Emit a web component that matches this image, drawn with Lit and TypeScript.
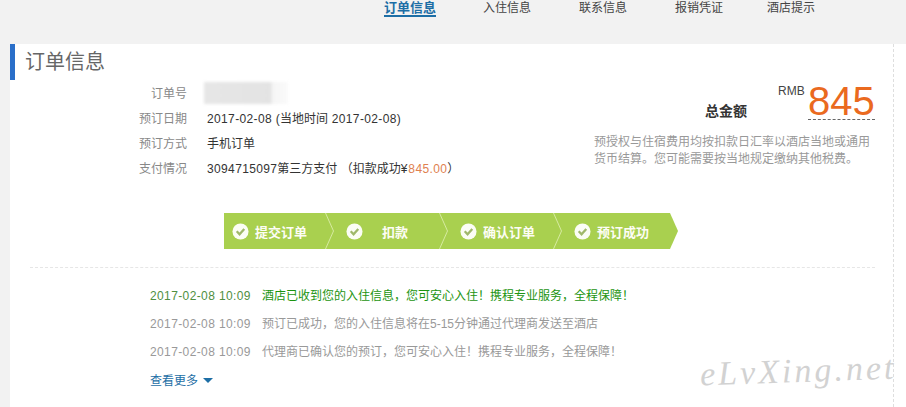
import { LitElement, html, css } from "lit";
import { customElement } from "lit/decorators.js";

const check = html`<svg class="chk" viewBox="0 0 18 18" width="17" height="17"><circle cx="9" cy="9" r="8.5" fill="#fbfdf5"/><path d="M5 8.8 L8 12 L13 6.3" fill="none" stroke="#9fb86a" stroke-width="2.4"/></svg>`;
const sep = html`<svg class="sep" viewBox="0 0 9 36" width="9" height="36"><path d="M0.5 0 L8.5 18 L0.5 36" fill="none" stroke="#d6eaa0" stroke-width="1"/></svg>`;

const steps = [
  { t: "提交订单", cls: "" },
  { t: "扣款", cls: "wide" },
  { t: "确认订单", cls: "" },
  { t: "预订成功", cls: "" },
];
const logs = [
  { time: "2017-02-08 10:09", msg: "酒店已收到您的入住信息，您可安心入住！携程专业服务，全程保障！", on: true },
  { time: "2017-02-08 10:09", msg: "预订已成功，您的入住信息将在5-15分钟通过代理商发送至酒店", on: false },
  { time: "2017-02-08 10:09", msg: "代理商已确认您的预订，您可安心入住！携程专业服务，全程保障！", on: false },
];

@customElement("app-root")
export class AppRoot extends LitElement {
  static styles = css`
    :host { display: block; width: 906px; height: 407px; overflow: hidden; background: #f2f2f2; font-family: "Liberation Sans", "Noto Sans CJK SC", sans-serif; font-size: 12px; color: #333; }
    .nav { height: 44px; display: flex; align-items: flex-start; padding-left: 384px; box-sizing: border-box; }
    .nav a { line-height: 15px; margin-top: 1px; color: #444; white-space: nowrap; margin-right: 48px; }
    .nav a.on { font-size: 13px; margin-top: 0; color: #1d6ea5; font-weight: 700; border-bottom: 2px solid #1d6ea5; height: 15px; margin-right: 47px; }
    .nav a.tight { margin-right: 44px; }
    .panel { position: relative; margin-left: 10px; background: #fff; height: 363px; }
    .inner { width: 883px; height: 363px; border-right: 1px dashed #dedede; }
    .title { border-left: 5px solid #2a6fc9; height: 36px; padding-left: 10px; font-size: 20px; line-height: 37px; color: #666; }
    .main { display: flex; }
    .info { padding: 2px 0 0 129px; width: 560px; box-sizing: border-box; }
    .row { display: flex; height: 25px; line-height: 25px; }
    .k { width: 48px; text-align: right; color: #888; margin-right: 20px; flex: none; }
    .v { color: #333; white-space: nowrap; }
    .d { letter-spacing: 0.36px; }
    .blur { width: 84px; height: 22px; margin: 0 0 0 -3px; background: linear-gradient(90deg, #e6e6e6, #e3e3e3 80%, #f5f5f5 81%, #fafafa 100%); filter: blur(1.5px); }
    .org { color: #e0814f; margin-left: 1px; }
    .right { width: 281px; margin-left: 24px; margin-top: -1px; display: flex; flex-direction: column; }
    .total { display: flex; align-items: flex-start; height: 46px; }
    .total .lbl { font-size: 14px; font-weight: 700; color: #333; margin: 22px 0 0 111px; width: 73px; line-height: 20px; }
    .total .rmb { font-size: 12px; color: #444; width: 30px; line-height: 14px; margin-top: 5px; }
    .total .num { font-size: 40px; line-height: 38px; color: #ea6a1f; width: 67px; height: 37px; border-bottom: 1px dashed #666; margin-top: 3px; }
    .desc { color: #999; line-height: 17px; margin-top: 9px; }
    .bar { display: flex; margin: 31px 0 0 214px; width: 454px; height: 36px; background: #a9d04f; clip-path: polygon(0 0, 446px 0, 454px 18px, 446px 36px, 0 36px); }
    .seg { display: flex; align-items: center; width: 114px; flex: none; color: #fdfdf5; font-size: 13px; font-weight: 700; padding-left: 8px; box-sizing: border-box; white-space: nowrap; }
    .seg .sep { margin-left: auto; margin-right: 4px; }
    .seg .chk { flex: none; }
    .seg .lb { margin-left: 6px; }
    .seg .lb.wide { margin-left: 19px; }
    .dash { margin: 18px 0 0 20px; width: 845px; border-top: 1px dashed #e6e6e6; }
    .logs { padding: 14px 0 0 140px; }
    .log { display: flex; height: 28px; line-height: 28px; color: #999; white-space: nowrap; }
    .log .tm { width: 112px; letter-spacing: 0.38px; }
    .log.on .tm { color: #4f8f3f; }
    .log.on .m { color: #1c9410; }
    .more { display: flex; align-items: center; height: 27px; color: #1d6ea5; }
    .tri { width: 0; height: 0; margin: 1px 0 0 5px; border-left: 5px solid transparent; border-right: 5px solid transparent; border-top: 5px solid #1d6ea5; }
    .wm { position: absolute; left: 690px; top: 308px; font-family: "Liberation Serif", serif; font-style: italic; font-size: 34px; letter-spacing: 3px; color: #d2d2d2; white-space: nowrap; transform: rotate(-2deg); }
  `;
  render() {
    return html`
      <div class="nav">
        <a class="on">订单信息</a><a>入住信息</a><a>联系信息</a><a class="tight">报销凭证</a><a>酒店提示</a>
      </div>
      <div class="panel">
        <div class="inner">
          <div class="title">订单信息</div>
          <div class="main">
            <div class="info">
              <div class="row"><span class="k">订单号</span><span class="blur"></span></div>
              <div class="row"><span class="k">预订日期</span><span class="v"><span class="d">2017-02-08 (</span>当地时间<span class="d"> 2017-02-08)</span></span></div>
              <div class="row"><span class="k">预订方式</span><span class="v">手机订单</span></div>
              <div class="row"><span class="k">支付情况</span><span class="v"><span class="d">3094715097</span>第三方支付 （扣款成功¥<span class="org d">845.00</span>）</span></div>
            </div>
            <div class="right">
              <div class="total">
                <span class="lbl">总金额</span><span class="rmb">RMB</span><span class="num">845</span>
              </div>
              <div class="desc">预授权与住宿费用均按扣款日汇率以酒店当地或通用<br />货币结算。您可能需要按当地规定缴纳其他税费。</div>
            </div>
          </div>
          <div class="bar">
            ${steps.map(
              (s, i) => html`<div class="seg">${check}<span class="lb ${s.cls}">${s.t}</span>${i < 3 ? sep : ""}</div>`
            )}
          </div>
          <div class="dash"></div>
          <div class="logs">
            ${logs.map(
              (l) => html`<div class="log ${l.on ? "on" : ""}"><span class="tm">${l.time}</span><span class="m">${l.msg}</span></div>`
            )}
            <div class="more">查看更多<span class="tri"></span></div>
          </div>
        </div>
        <div class="wm">eLvXing.net</div>
      </div>
    `;
  }
}
